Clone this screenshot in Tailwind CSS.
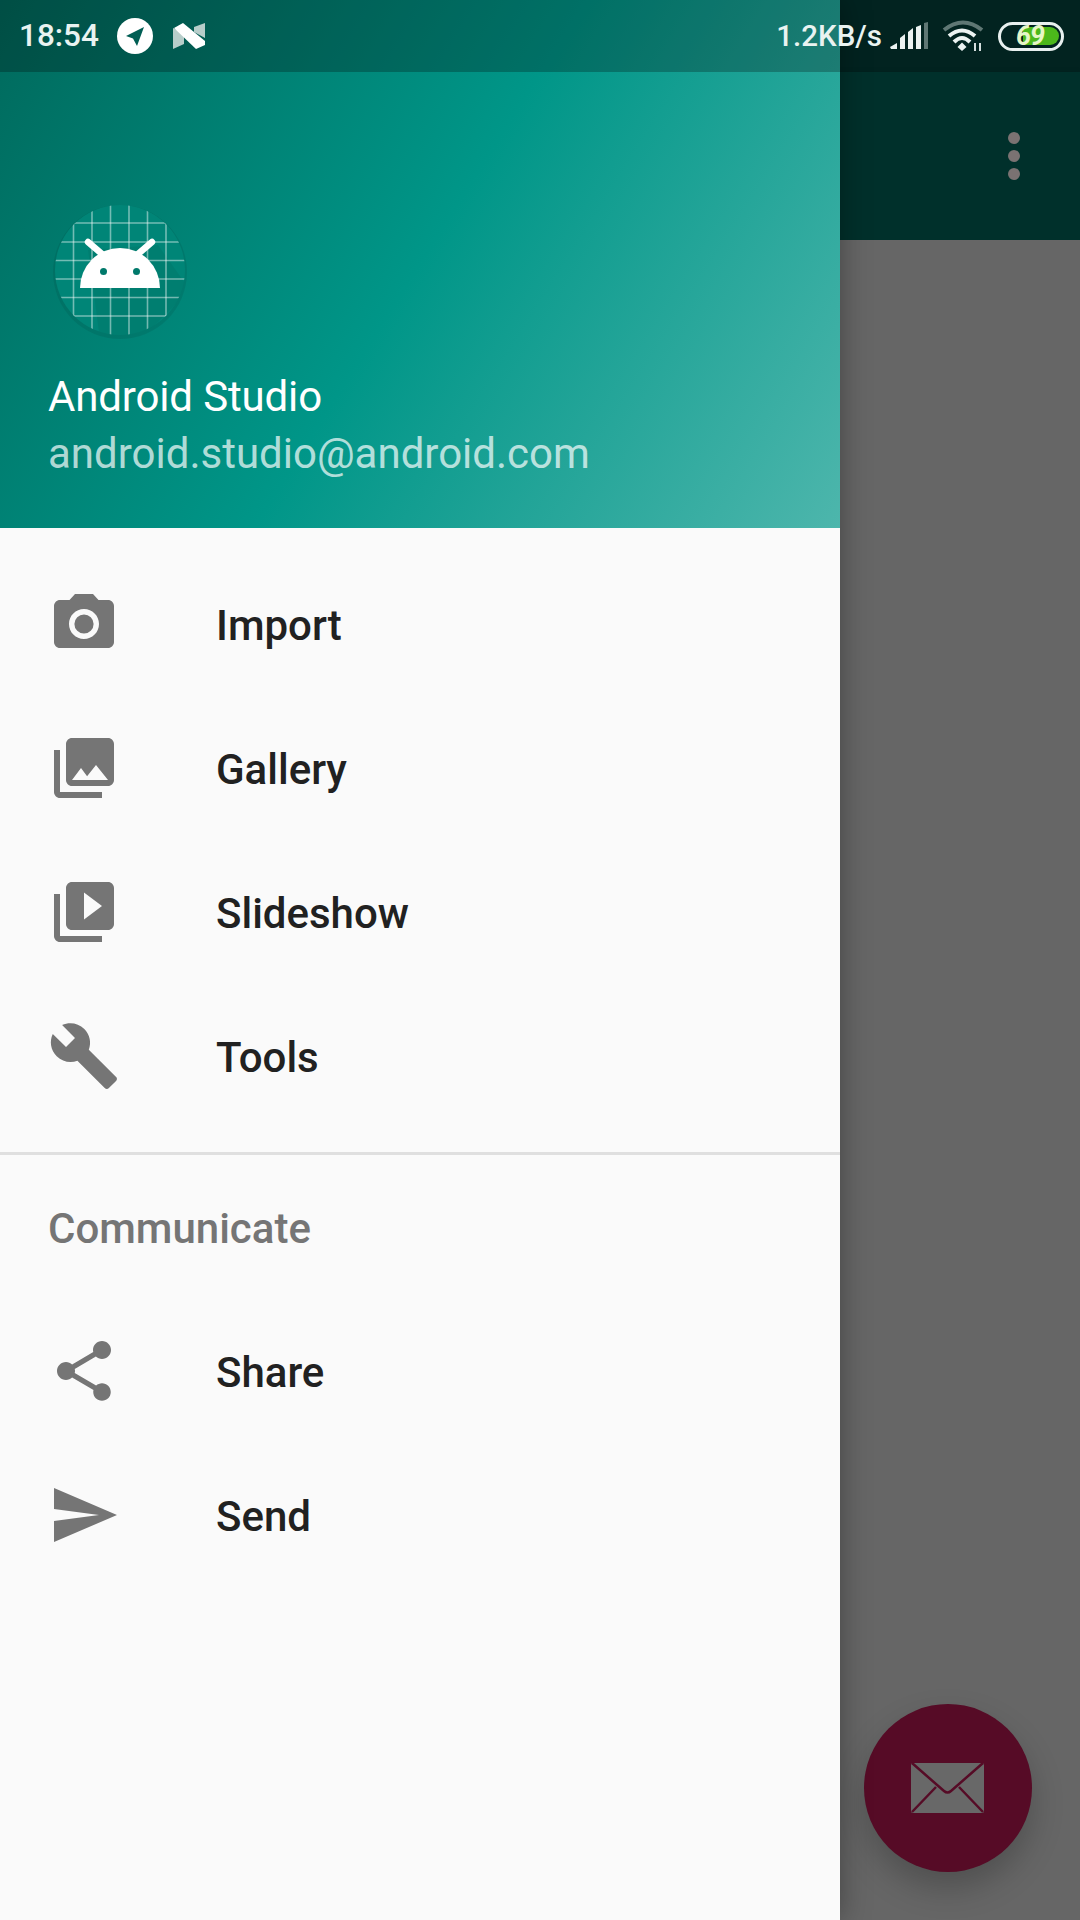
<!DOCTYPE html>
<html lang="en">
<head>
  <meta charset="UTF-8" />
  <meta name="viewport" content="width=device-width, initial-scale=1.0" />
  <title>Navigation drawer</title>
  <script src="https://cdn.jsdelivr.net/npm/@tailwindcss/browser@4"></script>
</head>
<body class="bg-[#646464]">
  <div class="relative w-[1080px] h-[1920px] overflow-hidden font-['Roboto',sans-serif]">

    <!-- page behind the scrim -->
    <div class="flex flex-col h-full">
      <div class="h-[72px] bg-[#022320]"></div>
      <div class="h-[168px] bg-[#00302b] shadow-[0_4px_8px_rgba(0,0,0,0.25)] flex items-center justify-end pr-[60px]">
        <div class="flex flex-col gap-[6px] mt-[-1px]">
          <span class="block w-3 h-3 rounded-full bg-[#7a7272]"></span>
          <span class="block w-3 h-3 rounded-full bg-[#7a7272]"></span>
          <span class="block w-3 h-3 rounded-full bg-[#7a7272]"></span>
        </div>
      </div>
      <div class="flex-1 bg-[#666666]"></div>
    </div>

    <!-- fab -->
    <div class="absolute right-12 bottom-12 w-[168px] h-[168px] rounded-full bg-[#560b26] shadow-[0_16px_32px_rgba(0,0,0,0.22)] flex items-center justify-center">
      <svg width="74" height="52" viewBox="0 0 74 52">
        <rect x="0" y="1" width="73" height="50" rx="2" fill="#686868"/>
        <path d="M1 1 L33 29 Q36.500 32 40 29 L72 1" fill="none" stroke="#560b26" stroke-width="2.500"/>
        <path d="M1 50 L25 25 M72 50 L48 25" fill="none" stroke="#560b26" stroke-width="2.500"/>
      </svg>
    </div>

    <!-- drawer -->
    <aside class="absolute left-0 top-0 w-[840px] h-full bg-[#fafafa] flex flex-col shadow-[0_0_28px_rgba(0,0,0,0.35)]">
      <header class="relative h-[528px] shrink-0 bg-[linear-gradient(302.2deg,#4db6ac,#009688,#00695c)] pl-12 flex flex-col">
        <div class="absolute left-0 top-0 w-full h-[72px] bg-black/25"></div>
        <svg class="mt-[198px] ml-0 shrink-0" width="144" height="144" viewBox="48 198 144 144">
          <defs>
            <clipPath id="launcher"><circle cx="120" cy="270" r="65"/></clipPath>
          </defs>
          <circle cx="120" cy="272" r="67" fill="#000" opacity="0.08"/>
          <circle cx="120" cy="270" r="65" fill="#008577"/>
          <g clip-path="url(#launcher)">
            <path d="M88 250 L158 245 L190 290 L140 340 L100 340 Z" fill="#000" opacity="0.05"/>
            <g stroke="#fff" stroke-opacity="0.45" stroke-width="1.600" fill="none">
              <path d="M73.500 223v93M92 205v130M110.500 205v130M129 205v130M147.500 205v130M166 223v93"/>
              <path d="M73.500 223h93M55 242h130M55 260.500h130M55 279h130M55 297.500h130M73.500 316h93"/>
            </g>
          </g>
          <path d="M88 242 L102 254 M152 242 L138 254" stroke="#fff" stroke-width="6.500" stroke-linecap="round"/>
          <path d="M80 288 a40 40 0 0 1 80 0 Z" fill="#fff"/>
          <circle cx="103.500" cy="271.500" r="3.500" fill="#00796b"/>
          <circle cx="136.500" cy="271.500" r="3.500" fill="#00796b"/>
        </svg>
        <p class="mt-[27px] text-[42px] leading-[56px] tracking-[-0.15px] text-white">Android Studio</p>
        <p class="text-[42px] leading-[57px] text-white/70">android.studio@android.com</p>
      </header>

      <nav class="flex flex-col pt-6 text-[#212121] text-[42px] font-medium">
        <a class="flex items-center h-36 pl-12">
          <svg class="w-[72px] h-[72px] shrink-0" viewBox="0 0 24 24" fill="#757575"><path d="M12 12m-3.200 0a3.200 3.200 0 1 1 6.400 0a3.200 3.200 0 1 1-6.400 0"/><path d="M9 2L7.170 4H4c-1.100 0-2 .9-2 2v12c0 1.100.9 2 2 2h16c1.100 0 2-.9 2-2V6c0-1.100-.9-2-2-2h-3.170L15 2H9zm3 15c-2.760 0-5-2.240-5-5s2.240-5 5-5 5 2.240 5 5-2.240 5-5 5z"/></svg>
          <span class="ml-24 mt-[2px]">Import</span>
        </a>
        <a class="flex items-center h-36 pl-12">
          <svg class="w-[72px] h-[72px] shrink-0" viewBox="0 0 24 24" fill="#757575"><path d="M22 16V4c0-1.100-.9-2-2-2H8c-1.100 0-2 .9-2 2v12c0 1.100.9 2 2 2h12c1.100 0 2-.9 2-2zm-11-4l2.030 2.710L16 11l4 5H8l3-4zM2 6v14c0 1.100.9 2 2 2h14v-2H4V6H2z"/></svg>
          <span class="ml-24 mt-[2px]">Gallery</span>
        </a>
        <a class="flex items-center h-36 pl-12">
          <svg class="w-[72px] h-[72px] shrink-0" viewBox="0 0 24 24" fill="#757575"><path d="M4 6H2v14c0 1.100.9 2 2 2h14v-2H4V6zm16-4H8c-1.100 0-2 .9-2 2v12c0 1.100.9 2 2 2h12c1.100 0 2-.9 2-2V4c0-1.100-.9-2-2-2zm-8 12.500v-9l6 4.500-6 4.500z"/></svg>
          <span class="ml-24 mt-[2px]">Slideshow</span>
        </a>
        <a class="flex items-center h-36 pl-12">
          <svg class="w-[72px] h-[72px] shrink-0" viewBox="0 0 24 24" fill="#757575"><path d="M22.700 19l-9.100-9.100c.9-2.300.4-5-1.500-6.900-2-2-5-2.400-7.400-1.300L9 6 6 9 1.600 4.700C.4 7.100.9 10.100 2.900 12.100c1.900 1.900 4.600 2.400 6.900 1.500l9.100 9.100c.4.4 1 .4 1.400 0l2.300-2.300c.5-.4.5-1.100.1-1.400z"/></svg>
          <span class="ml-24 mt-[2px]">Tools</span>
        </a>

        <div class="mt-6 h-[3px] bg-[#dfdfdf]"></div>

        <p class="h-[144px] pl-12 pt-[2px] flex items-center text-[#757575]">Communicate</p>

        <a class="flex items-center h-36 pl-12">
          <svg class="w-[72px] h-[72px] shrink-0" viewBox="0 0 24 24" fill="#757575"><path d="M18 16.080c-.76 0-1.440.3-1.960.77L8.910 12.700c.05-.23.09-.46.09-.7s-.04-.47-.09-.7l7.050-4.110c.54.5 1.250.81 2.040.81 1.660 0 3-1.340 3-3s-1.340-3-3-3-3 1.340-3 3c0 .24.04.47.09.7L8.040 9.810C7.500 9.310 6.790 9 6 9c-1.660 0-3 1.340-3 3s1.340 3 3 3c.79 0 1.500-.31 2.040-.81l7.120 4.160c-.05.21-.08.43-.08.65 0 1.610 1.310 2.920 2.920 2.920 1.610 0 2.920-1.310 2.920-2.920s-1.310-2.920-2.920-2.920z"/></svg>
          <span class="ml-24 mt-[2px]">Share</span>
        </a>
        <a class="flex items-center h-36 pl-12">
          <svg class="w-[72px] h-[72px] shrink-0" viewBox="0 0 24 24" fill="#757575"><path d="M2.010 21L23 12 2.010 3 2 10l15 2-15 2z"/></svg>
          <span class="ml-24 mt-[2px]">Send</span>
        </a>
      </nav>
    </aside>

    <!-- status bar -->
    <div class="absolute left-0 top-0 w-full h-[72px] flex items-center pl-[19px] pr-4 text-[29.5px] font-medium text-[#e9f3f1]">
      <span class="text-[31.5px] w-[81px]">18:54</span>
      <svg class="ml-[17px]" width="36" height="36" viewBox="0 0 36 36">
        <circle cx="18" cy="18" r="18" fill="#fff"/>
        <path d="M27 9 L9 18 L16 20.500 L20 28 Z" fill="#005e54"/>
      </svg>
      <svg class="ml-[19px]" width="34" height="28" viewBox="0 0 34 28">
        <path d="M1 6 L12 11 V22 L1 27 Z M33 1 V16 L22 10 V5 Z" fill="#b7cdca"/>
        <path d="M2 6 L11 1 L33 19 V23 L24 27 Z" fill="#fff"/>
      </svg>
      <span class="ml-auto">1.2KB/s</span>
      <svg class="ml-[8px]" width="40" height="28" viewBox="0 0 40 28">
        <path d="M0 25 L7 21 V27 H1 Z M10 16 L15 12 V27 H10 Z M18 10 L23 6 V27 H18 Z M26 5 L31 3 V27 H26 Z" fill="#ecf3f2"/>
        <path d="M34 1 L38 0 V27 H34 Z" fill="#5f7774"/>
      </svg>
      <svg class="ml-[12px]" width="42" height="32" viewBox="0 0 42 32">
        <path d="M2 10 Q21 -5 40 10" fill="none" stroke="#5f7774" stroke-width="4"/>
        <path d="M7 16 Q20 5 33 16" fill="none" stroke="#ecf3f2" stroke-width="4"/>
        <path d="M12 22 Q20 14 28 22" fill="none" stroke="#ecf3f2" stroke-width="4"/>
        <path d="M15.500 27 L20 22.500 L24.500 27 L20 31 Z" fill="#ecf3f2"/>
        <path d="M33 23 V31 M38 23 V31" stroke="#ecf3f2" stroke-width="1.800"/>
      </svg>
      <div class="relative ml-[14px] w-[66px] h-[29px] rounded-full border-[3px] border-[#e8f0ef] flex items-center justify-end pr-[2px]">
        <div class="w-[36px] h-[18px] rounded-r-full bg-[#4cb81b]"></div>
        <span class="absolute left-[15px] top-[-5px] text-[27px] leading-[33px] font-bold italic tracking-[-1px] text-[#e6f6c6]">69</span>
      </div>
    </div>
  </div>
</body>
</html>
